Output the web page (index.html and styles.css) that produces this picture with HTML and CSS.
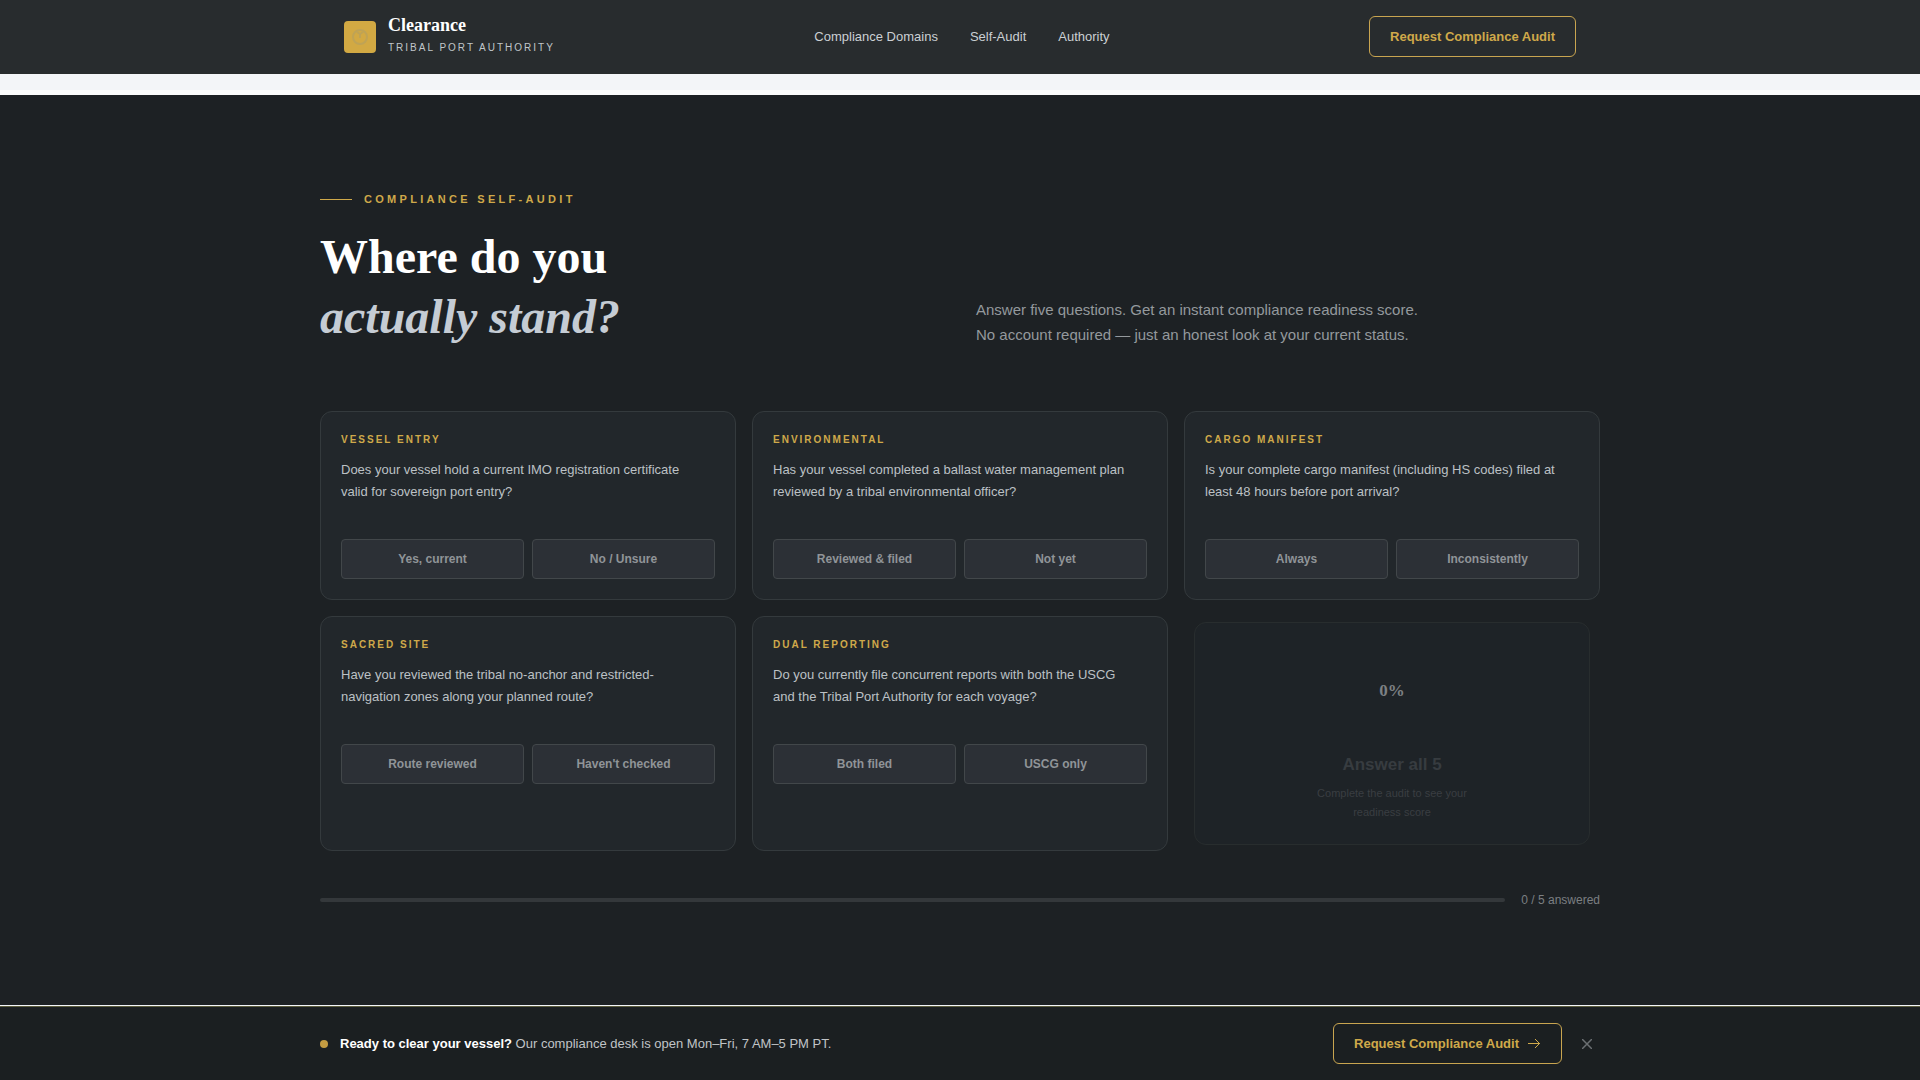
FILE: index.html
```html
<!DOCTYPE html>
<html lang="en">
<head>
    <meta charset="UTF-8">
    <meta name="viewport" content="width=device-width, initial-scale=1.0">
    <title>Clearance | Tribal Port Authority</title>
    <link rel="stylesheet" href="styles.css">
</head>
<body>
    <header class="site-header">
        <div class="header-inner">
            <a class="brand" href="#">
                <span class="brand-mark">
                    <svg width="18" height="18" viewBox="0 0 18 18" fill="none" stroke="#bfa355" stroke-width="2" aria-hidden="true">
                        <circle cx="9" cy="9" r="7"/>
                        <path d="M9 5v5M6 4l3 2 3-2"/>
                    </svg>
                </span>
                <span class="brand-text">
                    <span class="brand-name">Clearance</span>
                    <span class="brand-sub">Tribal Port Authority</span>
                </span>
            </a>
            <nav class="site-nav">
                <a href="#domains">Compliance Domains</a>
                <a href="#audit">Self-Audit</a>
                <a href="#authority">Authority</a>
            </nav>
            <button class="btn-outline" type="button">Request Compliance Audit</button>
        </div>
    </header>

    <div class="divider"></div>

    <main class="audit" id="audit">
        <div class="container">
            <p class="eyebrow">Compliance Self-Audit</p>
            <div class="audit-head">
                <h2>Where do you<br><em>actually stand?</em></h2>
                <p class="audit-intro">Answer five questions. Get an instant compliance readiness score. No account required — just an honest look at your current status.</p>
            </div>

            <div class="cards">
                <section class="card">
                    <h3>Vessel Entry</h3>
                    <p>Does your vessel hold a current IMO registration certificate valid for sovereign port entry?</p>
                    <div class="answers">
                        <button type="button">Yes, current</button>
                        <button type="button">No / Unsure</button>
                    </div>
                </section>
                <section class="card">
                    <h3>Environmental</h3>
                    <p>Has your vessel completed a ballast water management plan reviewed by a tribal environmental officer?</p>
                    <div class="answers">
                        <button type="button">Reviewed &amp; filed</button>
                        <button type="button">Not yet</button>
                    </div>
                </section>
                <section class="card">
                    <h3>Cargo Manifest</h3>
                    <p>Is your complete cargo manifest (including HS codes) filed at least 48 hours before port arrival?</p>
                    <div class="answers">
                        <button type="button">Always</button>
                        <button type="button">Inconsistently</button>
                    </div>
                </section>
                <section class="card">
                    <h3>Sacred Site</h3>
                    <p>Have you reviewed the tribal no-anchor and restricted-navigation zones along your planned route?</p>
                    <div class="answers">
                        <button type="button">Route reviewed</button>
                        <button type="button">Haven't checked</button>
                    </div>
                </section>
                <section class="card">
                    <h3>Dual Reporting</h3>
                    <p>Do you currently file concurrent reports with both the USCG and the Tribal Port Authority for each voyage?</p>
                    <div class="answers">
                        <button type="button">Both filed</button>
                        <button type="button">USCG only</button>
                    </div>
                </section>
                <section class="score-card">
                    <div class="score-ring">0%</div>
                    <h3>Answer all 5</h3>
                    <p>Complete the audit to see your readiness score</p>
                </section>
            </div>

            <div class="progress">
                <div class="progress-track"></div>
                <span>0 / 5 answered</span>
            </div>
        </div>
    </main>

    <div class="cta-bar">
        <div class="cta-inner">
            <span class="cta-dot"></span>
            <p><strong>Ready to clear your vessel?</strong> Our compliance desk is open Mon–Fri, 7 AM–5 PM PT.</p>
            <button class="btn-outline" type="button">
                Request Compliance Audit
                <svg width="14" height="14" viewBox="0 0 14 14" fill="none" stroke="currentColor" aria-hidden="true">
                    <path d="M1 6.5h12M8 2l4.5 4.5L8 11"/>
                </svg>
            </button>
            <button class="cta-close" type="button" aria-label="Dismiss">
                <svg width="10" height="10" viewBox="0 0 10 10" fill="none" stroke="currentColor" stroke-width="1.5" aria-hidden="true">
                    <path d="M0 0l10 10M10 0L0 10"/>
                </svg>
            </button>
        </div>
    </div>
</body>
</html>
```
FILE: styles.css
```css
* {
    box-sizing: border-box;
    margin: 0;
    padding: 0;
}
body {
    font-family: "Liberation Sans", Arial, sans-serif;
    background-color: #f3f5f8;
    color: #fff;
    padding-bottom: 75px; /* room for the fixed bar */
}
button {
    font-family: inherit;
    cursor: pointer;
}
a {
    color: inherit;
    text-decoration: none;
}

/* Header */
.site-header {
    background-color: #282c2e;
    border-bottom: 1px solid #282c2c;
}
.header-inner {
    max-width: 1280px;
    margin: 0 auto;
    padding: 16px 24px;
    display: flex;
    justify-content: space-between;
    align-items: center;
}
.brand {
    display: flex;
    align-items: center;
    gap: 12px;
}
.brand-mark {
    width: 32px;
    height: 32px;
    border-radius: 4px;
    background-color: #d2a943;
    display: flex;
    align-items: center;
    justify-content: center;
}
.brand-text {
    display: flex;
    flex-direction: column;
    gap: 4px;
}
.brand-name {
    font-family: "Liberation Serif", serif;
    font-size: 18px;
    font-weight: bold;
    line-height: 18px;
}
.brand-sub {
    font-size: 10px;
    line-height: 19px;
    letter-spacing: 2px;
    text-transform: uppercase;
    color: #c0c6ca;
}
.site-nav {
    display: flex;
    gap: 32px;
    font-size: 13px;
    color: #cbd0d4;
}
.btn-outline {
    display: flex;
    align-items: center;
    gap: 8px;
    padding: 12px 20px;
    border: 1px solid #c9a550;
    border-radius: 6px;
    background: none;
    color: #cfa94a;
    font-size: 13px;
    font-weight: bold;
    line-height: 15px;
}

.divider {
    height: 21px;
    border-bottom: 5px solid #fbfcfc;
}

/* Self-audit */
.audit {
    background-color: #1d2124;
    padding: 96px 24px;
}
.container {
    max-width: 1280px;
    margin: 0 auto;
}
.eyebrow {
    display: flex;
    align-items: center;
    gap: 12px;
    margin-bottom: 20px;
    font-size: 11px;
    font-weight: bold;
    line-height: 16px;
    letter-spacing: 0.3em;
    text-transform: uppercase;
    color: #cfa94a;
}
.eyebrow::before {
    content: "";
    width: 32px;
    height: 1px;
    background-color: #cfa94a;
}
.audit-head {
    display: grid;
    grid-template-columns: 1fr 1fr;
    gap: 32px;
    align-items: end;
    margin-bottom: 64px;
}
.audit-head h2 {
    font-family: "Liberation Serif", serif;
    font-size: 48px;
    line-height: 60px;
}
.audit-head em {
    color: #c5ccd4;
}
.audit-intro {
    max-width: 450px;
    font-size: 15px;
    line-height: 25px;
    color: #94999d;
}

/* Question cards */
.cards {
    display: grid;
    grid-template-columns: repeat(3, 1fr);
    gap: 16px;
}
.card {
    padding: 20px;
    border: 1px solid #343a3d;
    border-radius: 12px;
    background-color: #22272b;
}
.card h3 {
    margin-bottom: 11px;
    font-size: 10px;
    line-height: 16px;
    letter-spacing: 2px;
    text-transform: uppercase;
    color: #cfa94a;
}
.card p {
    max-width: 360px;
    min-height: 60px;
    margin-bottom: 20px;
    font-size: 13px;
    line-height: 22px;
    color: #bcc1c5;
}
.answers {
    display: grid;
    grid-template-columns: 1fr 1fr;
    gap: 8px;
}
.answers button {
    height: 40px;
    border: 1px solid #42474a;
    border-radius: 4px;
    background-color: #2c3036;
    color: #909498;
    font-size: 12px;
    font-weight: bold;
}

.score-card {
    margin: 6px 10px;
    padding: 30px 24px 22px;
    border: 1px solid #282d2e;
    border-radius: 12px;
    background-color: #1e2327;
    display: flex;
    flex-direction: column;
    align-items: center;
    text-align: center;
}
.score-ring {
    width: 76px;
    height: 76px;
    margin-bottom: 24px;
    display: flex;
    align-items: center;
    justify-content: center;
    font-family: "Liberation Serif", serif;
    font-size: 17px;
    font-weight: bold;
    color: #7c8083;
}
.score-card h3 {
    margin-bottom: 7px;
    font-size: 17px;
    line-height: 24px;
    color: #373c40;
}
.score-card p {
    max-width: 180px;
    font-size: 11px;
    line-height: 19px;
    color: #3a3e42;
}

.progress {
    display: flex;
    align-items: center;
    gap: 16px;
    margin-top: 40px;
    font-size: 12px;
    line-height: 18px;
    color: #7b7f82;
}
.progress-track {
    flex: 1;
    height: 4px;
    border-radius: 2px;
    background-color: #34383b;
}

/* Bottom bar */
.cta-bar {
    position: fixed;
    left: 0;
    right: 0;
    bottom: 0;
    padding: 16px 24px;
    border-top: 1px solid #5c5d3e;
    background-color: #1b1f21;
}
.cta-inner {
    max-width: 1280px;
    margin: 0 auto;
    display: flex;
    align-items: center;
    gap: 12px;
}
.cta-dot {
    width: 8px;
    height: 8px;
    border-radius: 50%;
    background-color: #c49c42;
}
.cta-inner p {
    flex: 1;
    font-size: 13px;
    color: #c0c4c7;
}
.cta-inner strong {
    color: #fff;
}
.cta-close {
    width: 26px;
    height: 26px;
    border: none;
    background: none;
    color: #6b6f72;
    display: flex;
    align-items: center;
    justify-content: center;
}
```
